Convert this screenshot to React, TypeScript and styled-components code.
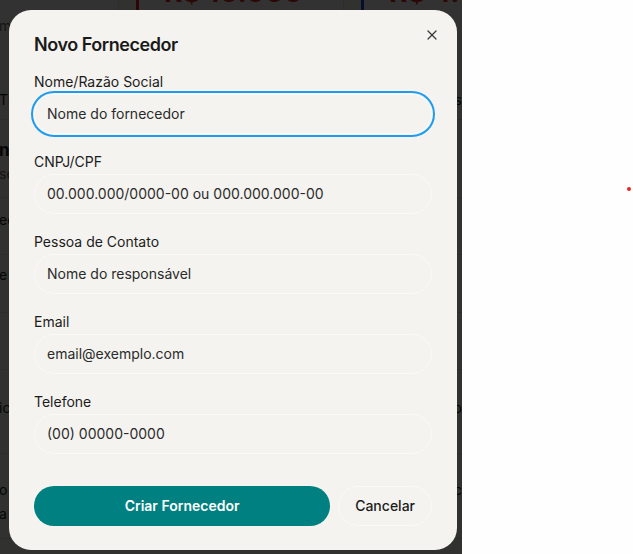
import styled, { createGlobalStyle, css } from "styled-components";
import { X } from "lucide-react";

const GlobalStyle = createGlobalStyle`
  * { box-sizing: border-box; }
  html, body { margin: 0; padding: 0; }
  body {
    font-family: Inter, "Noto Sans", "Liberation Sans", sans-serif;
    background: #fefefe;
    color: #1c1c1c;
  }
`;

const Screen = styled.div`
  display: flex;
  width: 633px;
  height: 554px;
  overflow: hidden;
`;

const AppFrame = styled.div`
  position: relative;
  width: 462px;
  height: 554px;
  flex-shrink: 0;
  overflow: hidden;
  background: #f4f3ef;
`;

const Blank = styled.div`
  position: relative;
  flex: 1;
  background: #fefefe;
`;

const Dot = styled.span`
  position: absolute;
  left: 165px;
  top: 187px;
  width: 4px;
  height: 4px;
  border-radius: 50%;
  background: #e32626;
`;

/* ---- page behind the overlay ---- */

const Page = styled.div`
  display: flex;
  flex-direction: column;
`;

const StatsRow = styled.div`
  display: grid;
  grid-template-columns: repeat(3, 208px);
  gap: 17px;
  margin-left: -89px;
  margin-top: -24px;
  height: 40px;
`;

const StatCard = styled.div<{ $accent: string }>`
  border-left: 3px solid ${(p) => p.$accent};
  border-right: 1px solid #e2e0da;
  background: #fbfaf7;
  padding: 0 0 0 25px;
  height: 52px;
`;

const StatValue = styled.div<{ $color: string }>`
  font-size: 28px;
  font-weight: 700;
  line-height: 32px;
  color: ${(p) => p.$color};
`;

const BgRow = styled.div<{ $h: number; $pad: number }>`
  display: flex;
  justify-content: space-between;
  align-items: flex-start;
  height: ${(p) => p.$h}px;
  border-bottom: 1px solid #dddbd5;
  padding-top: ${(p) => p.$pad}px;
`;

const BgCol = styled.div`
  display: flex;
  flex-direction: column;
  gap: 4px;
`;

const BgText = styled.span<{ $bold?: boolean; $muted?: boolean }>`
  font-size: ${(p) => (p.$bold ? 17 : 14)}px;
  font-weight: ${(p) => (p.$bold ? 700 : 400)};
  color: ${(p) => (p.$muted ? "#6b6b6b" : "#1c1c1c")};
  line-height: 20px;
  margin-left: -1px;
`;

const Overlay = styled.div`
  position: absolute;
  inset: 0;
  background: rgba(0, 0, 0, 0.8);
`;

/* ---- dialog ---- */

const Dialog = styled.div`
  position: absolute;
  left: 9px;
  top: 10px;
  width: 448px;
  background: #f4f3ef;
  border-radius: 22px;
  padding: 24px 25px;
  display: flex;
  flex-direction: column;
`;

const Title = styled.h2`
  margin: 0 0 16px;
  font-size: 18px;
  line-height: 1.2;
  font-weight: 600;
  letter-spacing: -0.45px;
  color: #1a1a1a;
`;

const CloseButton = styled.button`
  position: absolute;
  top: 17px;
  right: 17px;
  width: 16px;
  height: 16px;
  padding: 0;
  border: none;
  background: none;
  color: #3a3a3a;
  display: flex;
  align-items: center;
  justify-content: center;
  cursor: pointer;
`;

const Form = styled.form`
  display: flex;
  flex-direction: column;
  gap: 18px;
  margin: 0;
`;

const Field = styled.div`
  display: flex;
  flex-direction: column;
  gap: 2px;
`;

const Label = styled.label`
  font-size: 14px;
  line-height: 20px;
  font-weight: 400;
  color: #1c1c1c;
`;

const Input = styled.input<{ $focused?: boolean }>`
  height: 40px;
  width: 100%;
  border-radius: 9999px;
  border: 1px solid #fbfaf8;
  background: transparent;
  padding: 0 12px;
  font-family: inherit;
  font-size: 14px;
  color: #1c1c1c;
  outline: none;
  &::placeholder {
    color: #2b2b2b;
    opacity: 1;
  }
  ${(p) =>
    p.$focused &&
    css`
      outline: 2px solid #1e9cf0;
      outline-offset: 1px;
    `}
`;

const Actions = styled.div`
  display: flex;
  gap: 8px;
  margin-top: 14px;
`;

const Button = styled.button<{ $primary?: boolean }>`
  height: 40px;
  border-radius: 9999px;
  font-family: inherit;
  font-size: 14px;
  cursor: pointer;
  ${(p) =>
    p.$primary
      ? css`
          flex: 1;
          border: none;
          background: #008080;
          color: #ffffff;
          font-weight: 600;
        `
      : css`
          padding: 0 16px;
          border: 1px solid #fbfaf8;
          background: transparent;
          color: #1c1c1c;
          font-weight: 500;
        `}
`;

const fields = [
  { label: "Nome/Razão Social", placeholder: "Nome do fornecedor" },
  { label: "CNPJ/CPF", placeholder: "00.000.000/0000-00 ou 000.000.000-00" },
  { label: "Pessoa de Contato", placeholder: "Nome do responsável" },
  { label: "Email", placeholder: "email@exemplo.com" },
  { label: "Telefone", placeholder: "(00) 00000-0000" },
];

const App = (): JSX.Element => {
  return (
    <>
      <GlobalStyle />
      <Screen>
        <AppFrame>
          <Page>
            <StatsRow>
              <StatCard $accent="#16a34a">
                <StatValue $color="#15803d">100</StatValue>
              </StatCard>
              <StatCard $accent="#dc2626">
                <StatValue $color="#dc2626">R$ 10.000</StatValue>
              </StatCard>
              <StatCard $accent="#1d4ed8">
                <StatValue $color="#dc2626">R$ 4.</StatValue>
              </StatCard>
            </StatsRow>
            <BgRow $h={104} $pad={0}>
              <BgCol>
                <BgText $muted>me</BgText>
                <BgText style={{ marginTop: 50 }}>Ti</BgText>
              </BgCol>
              <BgText style={{ marginTop: 74 }}>s</BgText>
            </BgRow>
            <BgRow $h={78} $pad={20}>
              <BgCol>
                <BgText $bold>ne</BgText>
                <BgText $muted>se</BgText>
              </BgCol>
            </BgRow>
            <BgRow $h={57} $pad={12}>
              <BgText>ec</BgText>
            </BgRow>
            <BgRow $h={58} $pad={10}>
              <BgText>e</BgText>
            </BgRow>
            <BgRow $h={57} $pad={12} />
            <BgRow $h={84} $pad={28}>
              <BgText>ic</BgText>
              <BgText>o</BgText>
            </BgRow>
            <BgRow $h={85} $pad={26}>
              <BgCol>
                <BgText>o</BgText>
                <BgText>a</BgText>
              </BgCol>
              <BgText>c</BgText>
            </BgRow>
          </Page>
          <Overlay />
          <Dialog role="dialog">
            <Title>Novo Fornecedor</Title>
            <CloseButton type="button" aria-label="Fechar">
              <X size={16} strokeWidth={1.8} />
            </CloseButton>
            <Form onSubmit={(e) => e.preventDefault()}>
              {fields.map((f, i) => (
                <Field key={f.label}>
                  <Label>{f.label}</Label>
                  <Input placeholder={f.placeholder} $focused={i === 0} />
                </Field>
              ))}
              <Actions>
                <Button type="submit" $primary>
                  Criar Fornecedor
                </Button>
                <Button type="button">Cancelar</Button>
              </Actions>
            </Form>
          </Dialog>
        </AppFrame>
        <Blank>
          <Dot />
        </Blank>
      </Screen>
    </>
  );
};

export default App;
